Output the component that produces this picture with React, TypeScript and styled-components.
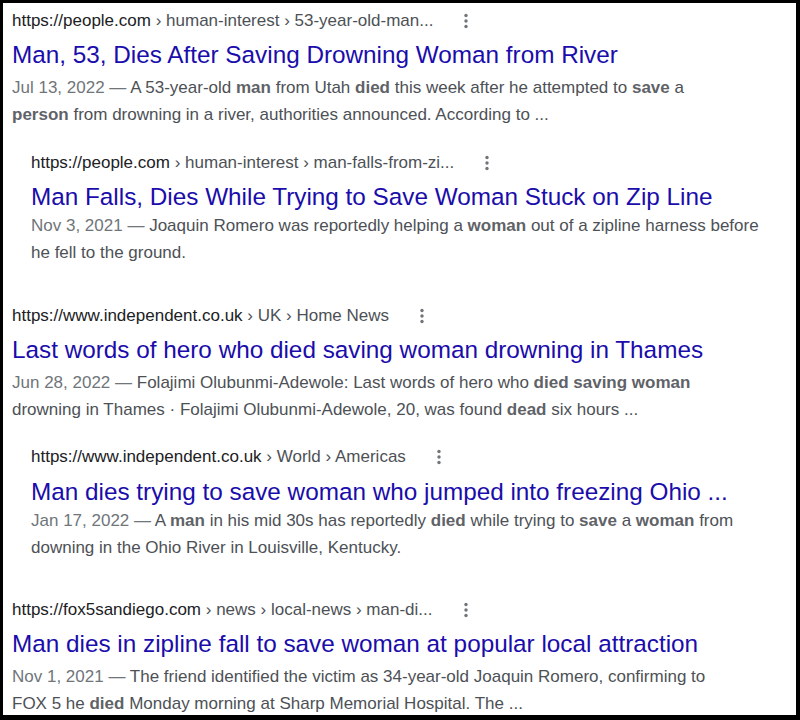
import React from "react";
import styled, { createGlobalStyle } from "styled-components";

const Global = createGlobalStyle`
  html, body { margin: 0; padding: 0; background: #fff; }
  body { font-family: "Liberation Sans", Arial, sans-serif; }
`;

const Frame = styled.div`
  box-sizing: border-box;
  width: 800px;
  height: 720px;
  border-style: solid;
  border-color: #000;
  border-width: 3px 4px 5px 3px;
  background: #fff;
  overflow: hidden;
  display: flex;
  flex-direction: column;
  padding-top: 5.5px;
`;

const Result = styled.div<{ $indent: boolean; $gap: number }>`
  display: flex;
  flex-direction: column;
  padding-left: ${(p) => (p.$indent ? 28 : 9)}px;
  margin-top: ${(p) => p.$gap}px;
`;

const UrlRow = styled.div`
  display: flex;
  align-items: center;
  height: 24px;
  font-size: 17px;
  white-space: nowrap;
`;

const Domain = styled.span`
  color: #202124;
`;

const Crumbs = styled.span`
  color: #4d5156;
  padding-left: 0.28em;
`;

const MoreButton = styled.span`
  display: flex;
  align-items: center;
  justify-content: center;
  width: 6px;
  height: 24px;
  margin-left: 30px;
`;

const Title = styled.a`
  display: block;
  margin-top: 7.3px;
  font-size: 24.3px;
  line-height: 30px;
  color: #1a0dab;
  text-decoration: none;
  white-space: nowrap;
`;

const Snippet = styled.div<{ $indent: boolean }>`
  margin-top: ${(p) => (p.$indent ? 0 : 3.8)}px;
  font-size: 17px;
  line-height: 27px;
  color: #4d5156;
  white-space: nowrap;
  b { color: #5f6368; font-weight: bold; }
`;

const DateText = styled.span`
  color: #70757a;
`;

const Dots = () => (
  <svg width="4" height="16" viewBox="0 0 4 16">
    <circle cx="2" cy="2.5" r="1.7" fill="#70757a" />
    <circle cx="2" cy="8" r="1.7" fill="#70757a" />
    <circle cx="2" cy="13.5" r="1.7" fill="#70757a" />
  </svg>
);

type R = {
  indent: boolean;
  domain: string;
  crumbs: string;
  title: string;
  date: string;
  body: React.ReactNode;
  gap: number;
};

const results: R[] = [
  {
    indent: false,
    domain: "https://people.com",
    crumbs: "› human-interest › 53-year-old-man...",
    title: "Man, 53, Dies After Saving Drowning Woman from River",
    date: "Jul 13, 2022",
    body: (
      <>
        A 53-year-old <b>man</b> from Utah <b>died</b> this week after he attempted to <b>save</b> a
        <br />
        <b>person</b> from drowning in a river, authorities announced. According to ...
      </>
    ),
    gap: 0,
  },
  {
    indent: true,
    domain: "https://people.com",
    crumbs: "› human-interest › man-falls-from-zi...",
    title: "Man Falls, Dies While Trying to Save Woman Stuck on Zip Line",
    date: "Nov 3, 2021",
    body: (
      <>
        Joaquin Romero was reportedly helping a <b>woman</b> out of a zipline harness before
        <br />
        he fell to the ground.
      </>
    ),
    gap: 23,
  },
  {
    indent: false,
    domain: "https://www.independent.co.uk",
    crumbs: "› UK › Home News",
    title: "Last words of hero who died saving woman drowning in Thames",
    date: "Jun 28, 2022",
    body: (
      <>
        Folajimi Olubunmi-Adewole: Last words of hero who <b>died saving woman</b>
        <br />
        drowning in Thames · Folajimi Olubunmi-Adewole, 20, was found <b>dead</b> six hours ...
      </>
    ),
    gap: 38,
  },
  {
    indent: true,
    domain: "https://www.independent.co.uk",
    crumbs: "› World › Americas",
    title: "Man dies trying to save woman who jumped into freezing Ohio ...",
    date: "Jan 17, 2022",
    body: (
      <>
        A <b>man</b> in his mid 30s has reportedly <b>died</b> while trying to <b>save</b> a <b>woman</b> from
        <br />
        downing in the Ohio River in Louisville, Kentucky.
      </>
    ),
    gap: 22.5,
  },
  {
    indent: false,
    domain: "https://fox5sandiego.com",
    crumbs: "› news › local-news › man-di...",
    title: "Man dies in zipline fall to save woman at popular local attraction",
    date: "Nov 1, 2021",
    body: (
      <>
        The friend identified the victim as 34-year-old Joaquin Romero, confirming to
        <br />
        FOX 5 he <b>died</b> Monday morning at Sharp Memorial Hospital. The ...
      </>
    ),
    gap: 37,
  },
];

export default function App() {
  return (
    <>
      <Global />
      <Frame>
        {results.map((r, i) => (
          <Result key={i} $indent={r.indent} $gap={r.gap}>
            <UrlRow>
              <Domain>{r.domain}</Domain>
              <Crumbs>{r.crumbs}</Crumbs>
              <MoreButton>
                <Dots />
              </MoreButton>
            </UrlRow>
            <Title href="#">{r.title}</Title>
            <Snippet $indent={r.indent}>
              <DateText>{r.date} — </DateText>
              {r.body}
            </Snippet>
          </Result>
        ))}
      </Frame>
    </>
  );
}
